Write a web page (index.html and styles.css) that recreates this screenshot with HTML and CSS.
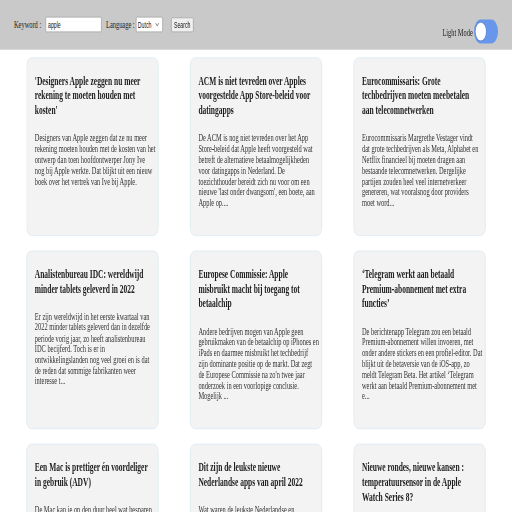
FILE: index.html
```html
<!DOCTYPE html>
<html lang="nl">
<head>
<meta charset="utf-8">
<title>Nieuws</title>
<link rel="stylesheet" href="styles.css">
</head>
<body>
<div class="viewport">
<div class="page">
  <header class="topbar">
    <form class="search">
      <label class="lbl" for="kw">Keyword :</label>
      <input id="kw" class="kw" type="text" value="apple">
      <label class="lbl lang-lbl" for="lang">Language :</label>
      <div class="select">
        <span>Dutch</span>
        <svg class="chev" viewBox="0 0 10 6" width="10" height="6"><path d="M1 1l4 4 4-4" fill="none" stroke="#555" stroke-width="1.2"/></svg>
      </div>
      <button type="button" class="btn">Search</button>
    </form>
    <div class="mode">
      <span class="mode-lbl">Light Mode</span>
      <span class="toggle"><span class="knob"></span></span>
    </div>
  </header>

  <main class="grid">
    <article class="card">
      <h3 class="title">'Designers Apple zeggen nu meer rekening te moeten houden met kosten'</h3>
      <p class="desc">Designers van Apple zeggen dat ze nu meer rekening moeten houden met de kosten van het ontwerp dan toen hoofdontwerper Jony Ive nog bij Apple werkte. Dat blijkt uit een nieuw boek over het vertrek van Ive bij Apple.</p>
    </article>
    <article class="card">
      <h3 class="title">ACM is niet tevreden over Apples voorgestelde App Store-beleid voor datingapps</h3>
      <p class="desc">De ACM is nog niet tevreden over het App Store-beleid dat Apple heeft voorgesteld wat betreft de alternatieve betaalmogelijkheden voor datingapps in Nederland. De toezichthouder bereidt zich nu voor om een nieuwe 'last onder dwangsom', een boete, aan Apple op....</p>
    </article>
    <article class="card">
      <h3 class="title">Eurocommissaris: Grote techbedrijven moeten meebetalen aan telecomnetwerken</h3>
      <p class="desc">Eurocommissaris Margrethe Vestager vindt<br>dat grote techbedrijven als Meta, Alphabet en Netflix financieel bij moeten dragen aan bestaande telecomnetwerken. Dergelijke partijen zouden heel veel internetverkeer genereren, wat vooralsnog door providers moet word...</p>
    </article>
    <article class="card">
      <h3 class="title">Analistenbureau IDC: wereldwijd minder tablets geleverd in 2022</h3>
      <p class="desc">Er zijn wereldwijd in het eerste kwartaal van 2022 minder tablets geleverd dan in dezelfde periode vorig jaar, zo heeft analistenbureau IDC becijferd. Toch is er in ontwikkelingslanden nog veel groei en is dat de reden dat sommige fabrikanten weer interesse t...</p>
    </article>
    <article class="card">
      <h3 class="title">Europese Commissie: Apple misbruikt macht bij toegang tot betaalchip</h3>
      <p class="desc">Andere bedrijven mogen van Apple geen gebruikmaken van de betaalchip op iPhones en iPads en daarmee misbruikt het techbedrijf zijn dominante positie op de markt. Dat zegt de Europese Commissie na zo'n twee jaar onderzoek in een voorlopige conclusie. Mogelijk ...</p>
    </article>
    <article class="card">
      <h3 class="title">‘Telegram werkt aan betaald Premium-abonnement met extra functies’</h3>
      <p class="desc">De berichtenapp Telegram zou een betaald Premium-abonnement willen invoeren, met onder andere stickers en een profiel-editor. Dat blijkt uit de betaversie van de iOS-app, zo meldt Telegram Beta. Het artikel ‘Telegram werkt aan betaald Premium-abonnement met e...</p>
    </article>
    <article class="card">
      <h3 class="title">Een Mac is prettiger én voordeliger in gebruik (ADV)</h3>
      <p class="desc">De Mac kan je op den duur heel wat besparen vanwege de lange levensduur en de hoge restwaarde van het apparaat...</p>
    </article>
    <article class="card">
      <h3 class="title">Dit zijn de leukste nieuwe Nederlandse apps van april 2022</h3>
      <p class="desc">Wat waren de leukste Nederlandse en Belgische apps van april 2022? We zetten ze op een rij...</p>
    </article>
    <article class="card">
      <h3 class="title">Nieuwe rondes, nieuwe kansen : temperatuursensor in de Apple Watch Series 8?</h3>
      <p class="desc">De Apple Watch Series 8 krijgt mogelijk een temperatuursensor...</p>
    </article>
  </main>
</div>
</div>
</body>
</html>
```

FILE: styles.css
```css
html, body {
  margin: 0;
  padding: 0;
  overflow: hidden;
  background: #ffffff;
}

.viewport {
  width: 512px;
  height: 512px;
  overflow: hidden;
}

/* The page is laid out at 1280px wide and shown squeezed into the window */
.page {
  width: 1280px;
  transform: scale(0.4, 0.7);
  transform-origin: 0 0;
  font-family: "Liberation Serif", "Times New Roman", serif;
  color: #222;
}

.topbar {
  height: 71px;
  background: #c9c9c9;
  display: flex;
  justify-content: space-between;
  align-items: flex-start;
  padding: 0 35px;
  box-sizing: border-box;
}

.search {
  display: flex;
  align-items: center;
  margin-top: 24px;
  height: 22px;
}

.lbl {
  font-size: 16px;
  color: #222;
}

.kw {
  width: 140px;
  height: 22px;
  box-sizing: border-box;
  margin: 0 0 0 11px;
  padding: 1px 5px;
  border: 1px solid #8f8f8f;
  border-radius: 2px;
  font-family: "Liberation Sans", Arial, sans-serif;
  font-size: 13px;
  color: #111;
  background: #fff;
}

.lang-lbl {
  margin-left: 11px;
}

.select {
  width: 67px;
  height: 22px;
  box-sizing: border-box;
  margin-left: 3px;
  border: 1px solid #8f8f8f;
  border-radius: 3px;
  background: #fff;
  display: flex;
  align-items: center;
  justify-content: space-between;
  padding: 0 8px 0 4px;
  font-family: "Liberation Sans", Arial, sans-serif;
  font-size: 13px;
  color: #111;
}

.chev {
  display: block;
}

.btn {
  margin-left: 21px;
  width: 56px;
  height: 21px;
  box-sizing: border-box;
  border: 1px solid #8f8f8f;
  border-radius: 3px;
  background: #efefef;
  font-family: "Liberation Sans", Arial, sans-serif;
  font-size: 13px;
  color: #111;
  padding: 0;
}

.mode {
  display: flex;
  align-items: center;
  margin-top: 28px;
}

.mode-lbl {
  font-size: 16px;
  color: #222;
  margin-right: 3px;
  padding-top: 2px;
}

.toggle {
  width: 60px;
  height: 34px;
  border-radius: 17px;
  background: #6896ea;
  display: flex;
  align-items: center;
  padding: 0 4px;
  box-sizing: border-box;
}

.knob {
  width: 26px;
  height: 26px;
  border-radius: 50%;
  background: #fff;
  box-shadow: 0 0 0 1px rgba(60, 90, 160, 0.35);
}

.grid {
  display: grid;
  grid-template-columns: repeat(3, 330px);
  column-gap: 79px;
  row-gap: 21px;
  padding: 11px 0 0 66px;
}

.card {
  height: 255px;
  box-sizing: border-box;
  background: #f3f3f3;
  border: 1px solid #cfe3ee;
  border-radius: 12px;
  padding: 21px 6px 0 20px;
  overflow: hidden;
}

.title {
  margin: 0 0 22px 0;
  font-size: 18.72px;
  line-height: 21px;
  font-weight: bold;
  color: #1c1c1c;
  width: 288px;
}

.desc {
  margin: 0;
  font-size: 16px;
  line-height: 15.4px;
  color: #333;
}
```
